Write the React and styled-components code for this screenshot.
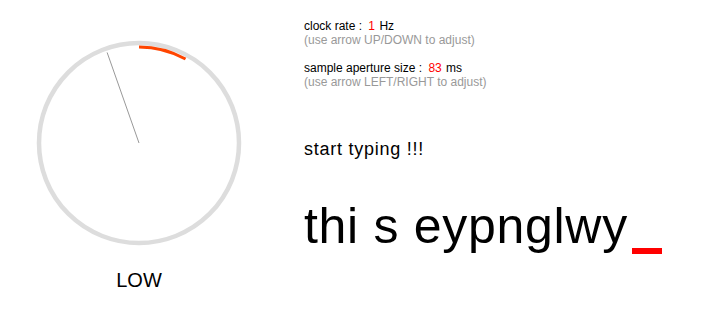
import React from "react";
import styled, { createGlobalStyle } from "styled-components";

const Global = createGlobalStyle`
  html, body { margin: 0; padding: 0; background: #fff; }
  body { font-family: "Liberation Sans", Arial, Helvetica, sans-serif; color: #000; }
`;

const Page = styled.div`
  display: flex;
  width: 715px;
  height: 323px;
  overflow: hidden;
`;

const Left = styled.div`
  width: 278px;
  padding-top: 38px;
  display: flex;
  flex-direction: column;
  align-items: center;
`;

const Dial = styled.svg`
  width: 210px;
  height: 210px;
  display: block;
`;

const Level = styled.div`
  margin-top: 20px;
  font-size: 20px;
  line-height: 24px;
`;

const Right = styled.div`
  margin-left: 26px;
  padding-top: 19px;
  display: flex;
  flex-direction: column;
`;

const Setting = styled.div`
  font-size: 12px;
  line-height: 14px;
  margin-top: ${(p) => p.$gap || 0}px;
`;

const Value = styled.span`
  color: #ff0000;
  margin: 0 1px 0 3px;
`;

const Hint = styled.div`
  color: #999;
`;

const Prompt = styled.div`
  margin-top: 49px;
  font-size: 18px;
  line-height: 22px;
  letter-spacing: 0.75px;
`;

const Typed = styled.div`
  margin-top: 36px;
  font-size: 50px;
  line-height: 60px;
  letter-spacing: 0.7px;
  white-space: pre;
`;

const Cursor = styled.span`
  display: inline-block;
  width: 30px;
  height: 6px;
  background: #ff0000;
  margin-left: 4px;
  vertical-align: -11px;
`;

export default function App() {
  const r = 96;
  const a = (29 * Math.PI) / 180;
  const ex = r * Math.sin(a);
  const ey = -r * Math.cos(a);
  const n = (-19.4 * Math.PI) / 180;
  const nx = 96 * Math.sin(n);
  const ny = -96 * Math.cos(n);
  return (
    <Page>
      <Global />
      <Left>
        <Dial viewBox="-105 -105 210 210">
          <circle cx="0" cy="0" r="100" fill="none" stroke="#dddddd" strokeWidth="4.5" />
          <path
            d={`M 0 ${-r} A ${r} ${r} 0 0 1 ${ex.toFixed(2)} ${ey.toFixed(2)}`}
            fill="none"
            stroke="#ff4500"
            strokeWidth="3"
          />
          <line x1="0" y1="0" x2={nx.toFixed(2)} y2={ny.toFixed(2)} stroke="#999" strokeWidth="1" />
        </Dial>
        <Level>LOW</Level>
      </Left>
      <Right>
        <Setting>
          <div>
            clock rate : <Value>1</Value> Hz
          </div>
          <Hint>(use arrow UP/DOWN to adjust)</Hint>
        </Setting>
        <Setting $gap={14}>
          <div>
            sample aperture size : <Value>83</Value> ms
          </div>
          <Hint>(use arrow LEFT/RIGHT to adjust)</Hint>
        </Setting>
        <Prompt>start typing !!!</Prompt>
        <Typed>
          thi s eypnglwy
          <Cursor />
        </Typed>
      </Right>
    </Page>
  );
}
